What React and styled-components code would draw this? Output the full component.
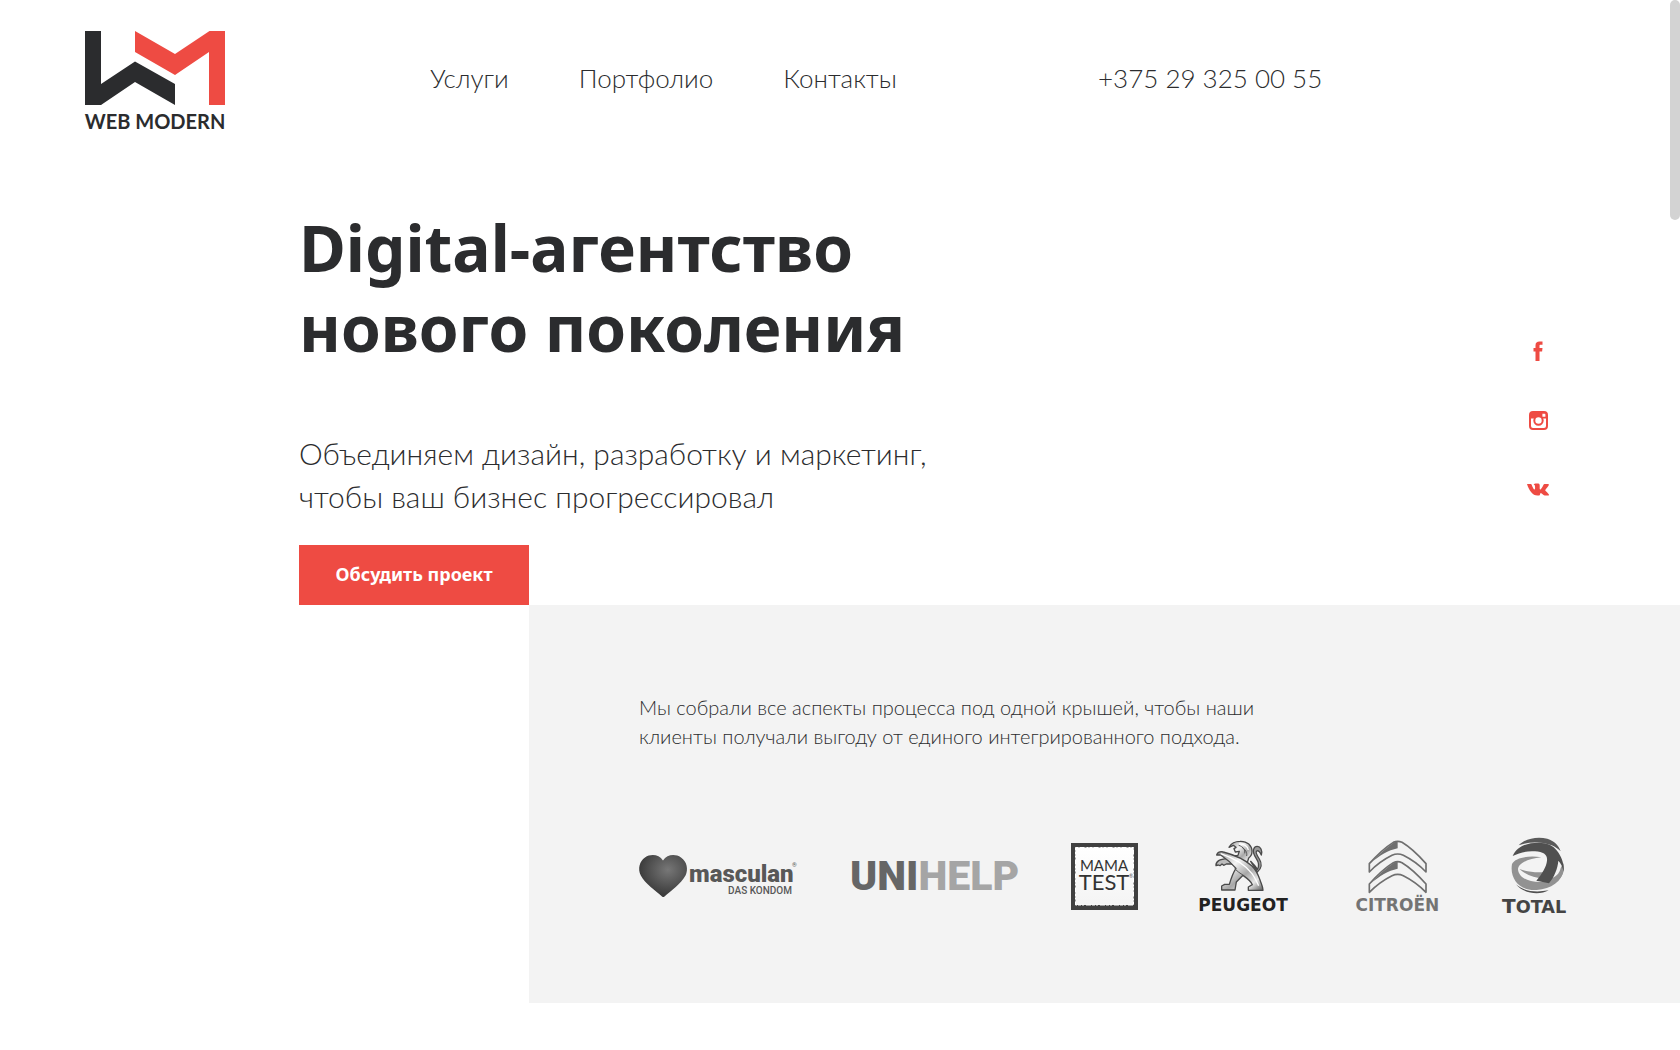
import React from "react";
import styled, { createGlobalStyle } from "styled-components";

const ink = "#2b2c2e";
const red = "#ee4b43";
const light = `"Lato", "Open Sans", sans-serif`;
const strong = `"Noto Sans", "Open Sans", sans-serif`;

const GlobalStyle = createGlobalStyle`
  *, *::before, *::after { box-sizing: border-box; }
  html { scrollbar-width: none; }
  body {
    margin: 0;
    background: #fff;
    color: ${ink};
    font-family: ${light};
    font-weight: 300;
  }
  h1, p, ul { margin: 0; padding: 0; }
  ul { list-style: none; }
  a { color: inherit; text-decoration: none; }
  svg { display: block; }
`;

const Page = styled.div`
  padding-bottom: 47px;
`;

const Header = styled.header`
  display: grid;
  grid-template-columns: 345fr 668fr 497fr;
  padding: 31px 85px 0;
`;

const HomeLink = styled.a`
  justify-self: start;
`;

const Nav = styled.nav`
  display: flex;
  gap: 70px;
  padding-top: 31px;
  font-size: 26px;
  line-height: 32px;
`;

const Phone = styled.a`
  padding-top: 31px;
  font-size: 26px;
  line-height: 32px;
`;

const Hero = styled.main`
  display: flex;
  justify-content: space-between;
  padding: 77px 131px 0 299px;
`;

const Title = styled.h1`
  font-family: ${strong};
  font-weight: 700;
  font-size: 64px;
  line-height: 80px;
`;

const Lead = styled.p`
  margin-top: 64px;
  font-size: 30px;
  line-height: 43px;
`;

const Button = styled.button`
  display: block;
  width: 230px;
  height: 60px;
  margin-top: 27px;
  padding: 0 0 2px;
  border: 0;
  background: ${red};
  color: #fff;
  font-family: ${strong};
  font-weight: 700;
  font-size: 18px;
  line-height: 24px;
  cursor: pointer;
`;

const Social = styled.ul`
  display: flex;
  flex-direction: column;
  gap: 47px;
  padding-top: 132px;
  color: ${red};
`;

const SocialLink = styled.a`
  display: grid;
  place-items: center;
  width: 22px;
  height: 22px;
`;

const Clients = styled.section`
  margin-left: 529px;
  padding: 88px 100px 89px 110px;
  background: #f3f3f3;
`;

const ClientsText = styled.p`
  font-size: 20px;
  line-height: 29px;
`;

const ClientList = styled.ul`
  display: flex;
  align-items: center;
  gap: 55px;
  margin-top: 87px;
`;

const BrandText = styled.text`
  font-family: ${(p) => p.$family};
  font-weight: ${(p) => p.$weight || 700};
  font-size: ${(p) => p.$size}px;
`;

const BrandSmall = styled.tspan`
  font-size: 53px;
`;

const ScrollThumb = styled.div`
  position: fixed;
  top: 0;
  right: 0;
  width: 10px;
  height: 220px;
  border-radius: 5px;
  background: #d3d3d3;
`;

const narrow = `"Roboto", sans-serif`;
const wide = `"DejaVu Sans", sans-serif`;

const WebModern = () => (
  <svg width="140" height="100" viewBox="0 0 140 100" overflow="visible" role="img" aria-label="Web Modern">
    <path fill={ink} d="M0 0h16v53L50 30.500 90 53v21L50 51 16 74H0z" />
    <path fill={red} d="M50 0l40 23L124.500 0H140v74h-16V21L90 44 50 21z" />
    <BrandText $family={light} $weight={700} $size={20} x="70" y="98" textAnchor="middle" fill={ink}>WEB MODERN</BrandText>
  </svg>
);

const Facebook = () => (
  <svg width="10" height="20" viewBox="0 0 9 20" fill="currentColor" aria-hidden="true">
    <path d="M2 20V10.500H0V7h2V4.500C2 1.500 3.500.500 6 .500h3v3.300H7C6.200 3.800 6 4.200 6 5v2h3l-.4 3.500H6V20z" />
  </svg>
);

const Instagram = () => (
  <svg width="19" height="19" viewBox="0 0 19 19" aria-hidden="true">
    <rect x="1" y="1" width="17" height="17" rx="3" fill="none" stroke="currentColor" strokeWidth="2" />
    <path fill="currentColor" fillRule="evenodd" d="M1 7.600V4a3 3 0 0 1 3-3h11a3 3 0 0 1 3 3v3.600h-4.400a5 5 0 0 0-8.200 0zM13.400 2.800v3h3v-3z" />
    <circle cx="9.500" cy="9.500" r="4.200" fill="#fff" stroke="currentColor" strokeWidth="2" />
  </svg>
);

const Vk = () => (
  <svg width="22" height="13" viewBox="0 0 22 13" fill="currentColor" aria-hidden="true">
    <path d="M0 1h3.800c.5 0 .7.300.9.800C5.500 4.300 6.700 6.600 7.500 6.600c.8 0 .7-3.600.2-4.300C7.400 1.800 7 1.600 6.600 1.500 7.100.800 8 .500 9.600.500c2.500 0 3.100.200 3.100 1.900v3c0 1.200.600 1.300 1.300.500 1-1.100 1.900-2.600 2.500-4.100.3-.600.500-.800 1-.800H21c.9 0 1 .500.800 1-.600 1.700-3.600 4.700-3.600 5.200 0 .600 3.200 2.900 3.700 4.400.2.600-.1 1-.9 1h-3.400c-1.400 0-2.600-2.500-3.800-2.500-1 0-.4 2.500-1.500 2.500H10.500C5.500 12.600 1.800 7 0 1z" />
  </svg>
);

const Masculan = () => (
  <svg width="157" height="42" viewBox="0 0 157 42" overflow="visible" role="img" aria-label="masculan das kondom">
    <defs>
      <radialGradient id="heart" cx="0.600" cy="0.350" r="0.600">
        <stop offset="0" stopColor="#777" />
        <stop offset="1" stopColor="#3c3c3c" />
      </radialGradient>
    </defs>
    <path fill="url(#heart)" d="M24 5.500C28-.500 36-1.500 42 2.500c6 4 7.500 12 4.500 18C42 29 32 35.500 25.500 41.500c-.7.700-1.700.700-2.500 0C17 35.500 6 29 1.800 20.500-1.500 14 .500 6 6 2.500c6-4 14-3 18 3z" />
    <BrandText $family={narrow} $weight={900} $size={24} x="50" y="27" fill="#585858">masculan</BrandText>
    <BrandText $family={narrow} $weight={500} $size={10} x="153" y="39" textAnchor="end" fill="#585858">DAS KONDOM</BrandText>
    <BrandText $family={narrow} $weight={400} $size={6} x="153" y="12" fill="#585858">®</BrandText>
  </svg>
);

const Unihelp = () => (
  <svg width="165" height="30" viewBox="0 0 165 30" overflow="visible" role="img" aria-label="Unihelp">
    <BrandText $family={`"Roboto", sans-serif`} $weight={900} $size={41} x="-1" y="29" fill="#666">
      UNI<tspan fill="#a5a5a5">HELP</tspan>
    </BrandText>
  </svg>
);

const MamaTest = () => (
  <svg width="67" height="67" viewBox="0 0 67 67" role="img" aria-label="Mama test">
    <defs>
      <linearGradient id="paper" x1="0" y1="0" x2="0" y2="1">
        <stop offset="0" stopColor="#fff" />
        <stop offset="1" stopColor="#f4f4f4" />
      </linearGradient>
    </defs>
    <rect width="67" height="67" fill="#404040" />
    <rect x="4.500" y="4.500" width="58" height="57.500" fill="url(#paper)" stroke="#fff" strokeWidth="1" strokeDasharray="3 1 5 2 2 1" />
    <BrandText $family={light} $weight={400} $size={15} x="33" y="28" textAnchor="middle" fill="#333">MAMA</BrandText>
    <BrandText $family={light} $weight={400} $size={22} x="33" y="47" textAnchor="middle" fill="#333">TEST</BrandText>
    <BrandText $family={light} $weight={400} $size={5} x="58" y="35" fill="#555">®</BrandText>
  </svg>
);

const Peugeot = () => (
  <svg width="100" height="72" viewBox="39 30 300 216" overflow="visible" role="img" aria-label="Peugeot">
    <defs>
      <linearGradient id="steel" x1="0" y1="0" x2="1" y2="1">
        <stop offset="0" stopColor="#8b8b8b" />
        <stop offset="0.350" stopColor="#f4f4f4" />
        <stop offset="0.600" stopColor="#a8a8a8" />
        <stop offset="0.800" stopColor="#e6e6e6" />
        <stop offset="1" stopColor="#5c5c5c" />
      </linearGradient>
    </defs>
    <g stroke="#4a4a4a" strokeWidth="4" strokeLinejoin="round" strokeLinecap="round">
      <path fill="#999" d="M212 94c8 8 14 12 20 24 6-9 5-20-3-32-7-11-12-20-8-29 4-11 17-10 22 0 3 6 3 12 1 18-4-9-9-15-14-12-5 4 2 15 8 24 9 14 7 29-6 39z" />
      <path fill="url(#steel)" d="M147 52c5-12 20-18 33-18 22-1 36 13 36 30 0 10-4 16-10 20l-6 20-40-26 14-2 4-12-12 2-4-10 6-4-8-6z" />
      <path fill="#bbb" d="M152 84c-14 2-26 2-36 8-7 5-9 9-8 15l7-2 5 2 6-5 5 4 8-4 22 0z" />
      <path fill="url(#steel)" d="M110 75c2-8 10-12 20-9 30 8 64 22 86 42 12 12 18 24 24 42 4 12 9 20 9 31h-44v-10l12-7c-3-10-14-18-28-28l-20 20-4 24h-40v-12l9-5h14c5-17 10-33 20-48-14-16-28-28-46-40z" />
    </g>
    <path fill="none" stroke="#fff" strokeWidth="4" d="M122 71c44 15 76 36 94 60 9 12 14 24 20 36M177 42c14-1 26 6 28 18" />
    <path fill="none" stroke="#555" strokeWidth="3" d="M176 46c14 4 20 14 18 24M164 116c8 8 16 14 26 20M186 52c10 6 16 16 14 26" />
    <BrandText $family={wide} $size={51} x="189" y="243" textAnchor="middle" fill="#222">PEUGEOT</BrandText>
  </svg>
);

const Citroen = () => (
  <svg width="99" height="72" viewBox="54 30 297 216" overflow="visible" role="img" aria-label="Citroën">
    {[0, 61].map((dy) => (
      <g key={dy} transform={`translate(0 ${dy})`}>
        <path fill="#f3f3f3" stroke="#6f6f6f" strokeWidth="5" strokeLinejoin="round" d="M118 101C142 74 166 52 190 37q13-6 26 0c25 15 48 37 72 64v25C266 103 244 88 220 76q-17-8-34 0c-24 12-46 27-68 50z" />
        <path fill="#6f6f6f" d="M120 101C144 74 168 54 191 38q6-4 12-3v20C174 61 150 76 120 101z" />
      </g>
    ))}
    <BrandText $family={wide} $size={51} x="202" y="243" textAnchor="middle" fill="#747474">CITROËN</BrandText>
  </svg>
);

const Total = () => (
  <svg width="70" height="76" viewBox="516 24 210 228" overflow="visible" role="img" aria-label="Total">
    <path fill="#929292" d="M634 82c-36-6-78 0-88 20-8 46 26 82 74 78 44-2 76-26 82-62-16 22-42 38-72 38-38 0-64-14-66-38 0-18 30-32 70-36z" />
    <path fill="#929292" d="M568 117c26 10 56 12 88 8l-4 20c-34 2-62-8-84-28zM660 146c16-4 28-14 32-32l8-14c6 26-6 50-32 60z" />
    <path fill="#5a5a5a" d="M566 46C586 26 620 18 652 26c22 8 34 20 40 38-14-16-36-24-62-26-22-2-44 0-64 8z" />
    <path fill="#505050" d="M548 78C560 50 590 38 625 38c28 0 44 8 56 24 14 18 22 40 20 62-4-14-8-24-16-32-2 24-12 48-28 68l-38-8c18-22 30-42 32-60 2-18-10-26-36-28-24-2-48 4-67 14zM558 163c22 20 56 26 98 18-28 16-76 10-98-18z" />
    <BrandText $family={wide} $size={60} x="516" y="249" fill="#444">
      T<BrandSmall>OTAL</BrandSmall>
    </BrandText>
  </svg>
);

const socials = [
  ["Facebook", Facebook],
  ["Instagram", Instagram],
  ["VK", Vk],
];

const clients = [Masculan, Unihelp, MamaTest, Peugeot, Citroen, Total];

export default function App() {
  return (
    <Page>
      <GlobalStyle />
      <Header>
        <HomeLink href="#home"><WebModern /></HomeLink>
        <Nav>
          <a href="#services">Услуги</a>
          <a href="#portfolio">Портфолио</a>
          <a href="#contacts">Контакты</a>
        </Nav>
        <Phone href="tel:+375293250055">+375 29 325 00 55</Phone>
      </Header>
      <Hero>
        <div>
          <Title>Digital-агентство<br />нового поколения</Title>
          <Lead>Объединяем дизайн, разработку и маркетинг,<br />чтобы ваш бизнес прогрессировал</Lead>
          <Button type="button">Обсудить проект</Button>
        </div>
        <Social>
          {socials.map(([name, Icon]) => (
            <li key={name}>
              <SocialLink href={`#${name.toLowerCase()}`} aria-label={name}><Icon /></SocialLink>
            </li>
          ))}
        </Social>
      </Hero>
      <Clients>
        <ClientsText>
          Мы собрали все аспекты процесса под одной крышей, чтобы наши<br />
          клиенты получали выгоду от единого интегрированного подхода.
        </ClientsText>
        <ClientList>
          {clients.map((Logo, i) => <li key={i}><Logo /></li>)}
        </ClientList>
      </Clients>
      <ScrollThumb />
    </Page>
  );
}
